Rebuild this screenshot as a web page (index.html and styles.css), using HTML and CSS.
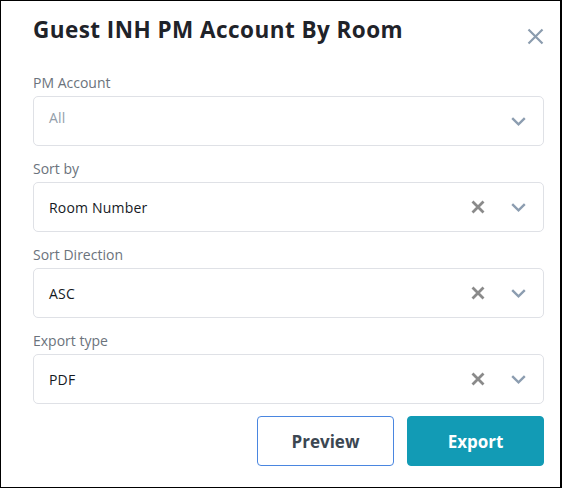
FILE: index.html
```html
<!DOCTYPE html>
<html lang="en">
<head>
<meta charset="utf-8">
<title>Guest INH PM Account By Room</title>
<link rel="stylesheet" href="styles.css">
</head>
<body>
<div class="dialog">
  <div class="header">
    <h1 class="title">Guest INH PM Account By Room</h1>
    <button class="close" aria-label="Close">
      <svg width="17" height="17" viewBox="0 0 17 17"><path d="M1.5 1.5 L15.5 15.5 M15.5 1.5 L1.5 15.5" stroke="#8b9cae" stroke-width="2.2" stroke-linecap="butt" fill="none"/></svg>
    </button>
  </div>

  <div class="field">
    <label class="label">PM Account</label>
    <div class="select">
      <span class="value placeholder">All</span>
      <span class="icons">
        <svg class="chev" width="15" height="9" viewBox="0 0 15 9"><path d="M1.2 1.2 L7.5 7.3 L13.8 1.2" stroke="#8c9db0" stroke-width="2.4" fill="none"/></svg>
      </span>
    </div>
  </div>

  <div class="field">
    <label class="label">Sort by</label>
    <div class="select">
      <span class="value">Room Number</span>
      <span class="icons">
        <svg class="clear" width="14" height="14" viewBox="0 0 14 14"><path d="M1.5 1.5 L12.5 12.5 M12.5 1.5 L1.5 12.5" stroke="#8a8a8a" stroke-width="2.8" fill="none"/></svg>
        <svg class="chev" width="15" height="9" viewBox="0 0 15 9"><path d="M1.2 1.2 L7.5 7.3 L13.8 1.2" stroke="#8c9db0" stroke-width="2.4" fill="none"/></svg>
      </span>
    </div>
  </div>

  <div class="field">
    <label class="label">Sort Direction</label>
    <div class="select">
      <span class="value">ASC</span>
      <span class="icons">
        <svg class="clear" width="14" height="14" viewBox="0 0 14 14"><path d="M1.5 1.5 L12.5 12.5 M12.5 1.5 L1.5 12.5" stroke="#8a8a8a" stroke-width="2.8" fill="none"/></svg>
        <svg class="chev" width="15" height="9" viewBox="0 0 15 9"><path d="M1.2 1.2 L7.5 7.3 L13.8 1.2" stroke="#8c9db0" stroke-width="2.4" fill="none"/></svg>
      </span>
    </div>
  </div>

  <div class="field">
    <label class="label">Export type</label>
    <div class="select">
      <span class="value">PDF</span>
      <span class="icons">
        <svg class="clear" width="14" height="14" viewBox="0 0 14 14"><path d="M1.5 1.5 L12.5 12.5 M12.5 1.5 L1.5 12.5" stroke="#8a8a8a" stroke-width="2.8" fill="none"/></svg>
        <svg class="chev" width="15" height="9" viewBox="0 0 15 9"><path d="M1.2 1.2 L7.5 7.3 L13.8 1.2" stroke="#8c9db0" stroke-width="2.4" fill="none"/></svg>
      </span>
    </div>
  </div>

  <div class="actions">
    <button class="btn btn-outline">Preview</button>
    <button class="btn btn-primary">Export</button>
  </div>
</div>
</body>
</html>
```

FILE: styles.css
```css
html, body {
  margin: 0;
  padding: 0;
}
body {
  width: 562px;
  height: 488px;
  box-sizing: border-box;
  border: 1px solid #000;
  border-right-width: 2px;
  background: #fff;
  font-family: "Open Sans", Roboto, "Liberation Sans", sans-serif;
  overflow: hidden;
}
.dialog {
  padding: 16px 16px 0 32px;
}
.header {
  display: flex;
  justify-content: space-between;
  align-items: flex-start;
  margin-bottom: 28px;
}
.title {
  margin: 0;
  font-size: 22.5px;
  line-height: 26px;
  font-weight: 700;
  letter-spacing: 0.45px;
  color: #1f2329;
}
.close {
  margin-top: 11px;
  padding: 0;
  border: 0;
  background: none;
  width: 17px;
  height: 17px;
  display: flex;
}
.field {
  display: flex;
  flex-direction: column;
  margin-bottom: 13px;
}
.label {
  font-size: 14px;
  line-height: 20px;
  color: #6b737c;
  margin-bottom: 3px;
}
.select {
  height: 50px;
  box-sizing: border-box;
  border: 1px solid #dfe1e6;
  border-radius: 5px;
  display: flex;
  align-items: center;
  justify-content: space-between;
  padding: 0 17px 0 15px;
}
.value {
  font-size: 14px;
  font-weight: 500;
  letter-spacing: 0.2px;
  color: #161a1f;
}
.value.placeholder {
  color: #939eaa;
  margin-bottom: 8px;
}
.icons {
  display: flex;
  align-items: center;
  gap: 26px;
}
.clear, .chev {
  display: block;
}
.actions {
  display: flex;
  justify-content: flex-end;
  gap: 13px;
  margin-top: -1px;
}
.btn {
  width: 137px;
  height: 50px;
  box-sizing: border-box;
  border-radius: 4px;
  font-family: "Open Sans", Roboto, "Liberation Sans", sans-serif;
  font-size: 17px;
  font-weight: 700;
  cursor: pointer;
}
.btn-outline {
  background: #fff;
  border: 1px solid #4a86e0;
  color: #3c4752;
}
.btn-primary {
  background: #129bb5;
  border: 1px solid #129bb5;
  color: #fff;
}
```
